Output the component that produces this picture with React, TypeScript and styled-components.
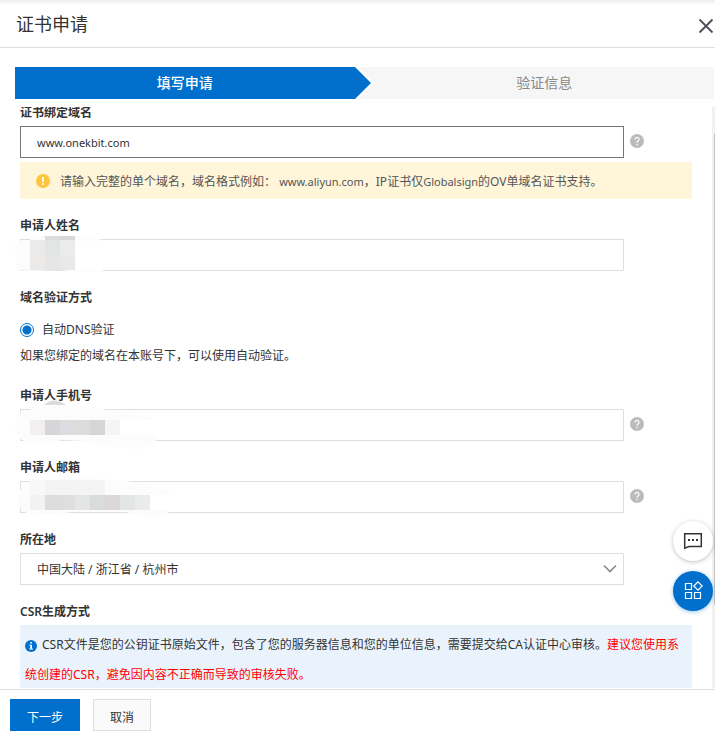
import React from "react";
import styled, { createGlobalStyle } from "styled-components";

const GlobalStyle = createGlobalStyle`
  * { box-sizing: border-box; }
  body { margin: 0; background: #fff; }
  body, button, input, select {
    font-family: "Noto Sans", "Noto Sans CJK SC", sans-serif;
    font-size: 12px;
    color: #333;
  }
`;

const Dialog = styled.main`
  display: flex;
  flex-direction: column;
  height: 100vh;
  background: #fff;
`;

const Header = styled.header`
  flex: none;
  display: flex;
  align-items: center;
  justify-content: space-between;
  height: 48px;
  padding: 0 1px 0 16px;
  border-bottom: 1px solid #dedede;
  background: linear-gradient(#ededed, #fff 5px);
`;

const Title = styled.h1`
  margin: 0;
  font-size: 18px;
  line-height: 24px;
  font-weight: 400;
`;

const CloseButton = styled.button`
  display: flex;
  margin-top: 4px;
  padding: 0;
  border: 0;
  background: none;
  cursor: pointer;
`;

const Steps = styled.ol`
  flex: none;
  display: flex;
  margin: 19px 1px 8px 15px;
  padding: 0;
  list-style: none;
`;

const Step = styled.li<{ $active?: boolean }>`
  flex: 1;
  height: 32px;
  line-height: 32px;
  text-align: center;
  font-size: 14px;
  font-weight: ${(p) => (p.$active ? 500 : 400)};
  color: ${(p) => (p.$active ? "#fff" : "#888")};
  background: ${(p) => (p.$active ? "#0070cc" : "#f6f6f6")};
`;

const StepArrow = styled.li`
  display: flex;
  width: 20px;
`;

const Body = styled.div`
  flex: 1;
  min-height: 0;
  display: flex;
  margin-bottom: 1px;
  overflow: hidden;
`;

const Form = styled.form`
  flex: 1;
  min-width: 0;
  margin-top: -5px;
  padding: 0 20px;
`;

const ScrollTrack = styled.div`
  flex: none;
  width: 3px;
  padding: 27px 0 83px 2px;
  background: #f1f1f1;
`;

const ScrollThumb = styled.div`
  height: 100%;
  background: #c1c1c1;
`;

const Field = styled.div`
  margin-bottom: 16px;
`;

const Label = styled.label`
  display: block;
  margin-bottom: 2px;
  line-height: 22px;
  font-weight: 600;
`;

const Control = styled.div`
  position: relative;
  display: grid;
  grid-template-columns: 1fr 62px;
  column-gap: 6px;
`;

const TextInput = styled.input<{ $focused?: boolean }>`
  width: 100%;
  height: 32px;
  padding: 0 16px;
  border: 1px solid ${(p) => (p.$focused ? "#777" : "#dedede")};
  border-radius: 0;
  background: #fff;
  font-size: 11px;
  outline: none;
`;

const Select = styled.select`
  grid-area: 1 / 1;
  width: 100%;
  height: 32px;
  padding: 0 16px;
  border: 1px solid #dedede;
  border-radius: 0;
  appearance: none;
  background: #fff;
  outline: none;
`;

const SelectArrow = styled.svg`
  grid-area: 1 / 1;
  align-self: center;
  justify-self: end;
  margin-right: 7px;
  pointer-events: none;
`;

const HelpButton = styled.button`
  align-self: start;
  justify-self: start;
  display: flex;
  margin-top: 8px;
  padding: 0;
  border: 0;
  background: none;
`;

const Mask = styled.svg`
  position: absolute;
  left: -10px;
  top: -12px;
  pointer-events: none;
`;

const Warning = styled.p`
  display: flex;
  align-items: center;
  gap: 10px;
  height: 37px;
  margin: 4px 0 16px;
  padding: 0 16px;
  background: #fff6da;
  color: #555;
`;

const Latin = styled.span`
  font-size: 11px;
`;

const Fieldset = styled.fieldset`
  margin: 0 0 18px;
  padding: 0;
  border: 0;
`;

const Legend = styled.legend`
  padding: 0;
  margin-bottom: 10px;
  line-height: 22px;
  font-weight: 600;
`;

const RadioLabel = styled.label`
  display: flex;
  align-items: center;
  gap: 8px;
  line-height: 22px;
`;

const Radio = styled.input`
  appearance: none;
  width: 14px;
  height: 14px;
  margin: 0;
  border: 1px solid #0070cc;
  border-radius: 50%;
  background: radial-gradient(circle, #0070cc 4px, #fff 5px);
`;

const Hint = styled.p`
  margin: 4px 0 0;
  line-height: 22px;
`;

const GroupTitle = styled.h2`
  margin: 0 0 2px;
  font-size: 12px;
  line-height: 22px;
  font-weight: 600;
`;

const Notice = styled.p`
  margin: 0;
  padding: 5px;
  line-height: 30px;
  background: #eaf3fb;
`;

const InfoIcon = styled.svg`
  margin-right: 5px;
  vertical-align: -3px;
`;

const Danger = styled.span`
  color: #f00;
`;

const Footer = styled.footer`
  flex: none;
  display: flex;
  gap: 13px;
  height: 48px;
  padding: 9px 10px;
  border-top: 1px solid #dedede;
`;

const Button = styled.button<{ $primary?: boolean }>`
  height: 32px;
  padding: 4px 16px 0;
  border: 1px solid ${(p) => (p.$primary ? "#0070cc" : "#dedede")};
  background: ${(p) => (p.$primary ? "#0070cc" : "#fafafa")};
  color: ${(p) => (p.$primary ? "#fff" : "#333")};
  cursor: pointer;
`;

const FloatingTools = styled.aside`
  position: fixed;
  right: 2px;
  bottom: 126px;
  display: grid;
  gap: 10px;
`;

const RoundButton = styled.button<{ $primary?: boolean }>`
  display: flex;
  align-items: center;
  justify-content: center;
  width: 40px;
  height: 40px;
  padding: 0;
  border: 0;
  border-radius: 50%;
  background: ${(p) => (p.$primary ? "#0070cc" : "#fff")};
  box-shadow: 0 1px 4px ${(p) => (p.$primary ? "rgba(0,112,204,.4)" : "rgba(0,0,0,.25)")};
`;

function Help() {
  return (
    <HelpButton type="button" aria-label="帮助">
      <svg width="14" height="14" viewBox="0 0 14 14">
        <circle cx="7" cy="7" r="7" fill="#bbb" />
        <path d="M5 5.4a2 2 0 1 1 3.1 1.6C7.3 7.5 7 7.8 7 8.7" fill="none" stroke="#fff" strokeWidth="1.2" />
        <circle cx="7" cy="10.5" r=".8" fill="#fff" />
      </svg>
    </HelpButton>
  );
}

type Cell = [number, number, number, number, string];

function Mosaic({ cells, smear, shade }: { cells: Cell[]; smear: string; shade?: string }) {
  return (
    <Mask width="180" height="56" viewBox="0 0 180 56" aria-hidden="true">
      {shade && <path d={shade} fill="#dadbdb" />}
      <path d={smear} fill="#fcfcfc" />
      {cells.map(([x, y, w, h, fill]) => (
        <rect key={`${x}-${y}`} x={x} y={y} width={w} height={h} fill={fill} />
      ))}
    </Mask>
  );
}

const nameCells: Cell[] = [
  [20, 13, 15, 30, "#ebeae9"],
  [35, 9, 15, 4, "#dcdddd"],
  [50, 9, 15, 4, "#d7d9d9"],
  [35, 13, 15, 15, "#e2e4e6"],
  [50, 13, 15, 15, "#ebedec"],
  [35, 28, 15, 15, "#e6e6e6"],
  [50, 28, 15, 15, "#e9e9e9"],
];

const phoneCells: Cell[] = [
  [20, 23, 15, 15, "#f1f0ee"],
  [35, 23, 15, 15, "#d6d6d8"],
  [50, 23, 15, 15, "#dcdde0"],
  [65, 23, 15, 15, "#dcdcda"],
  [80, 23, 15, 15, "#d8d5d6"],
  [95, 23, 15, 15, "#f4f5f7"],
];

const emailCells: Cell[] = [
  [20, 11, 15, 15, "#f8f8f8"],
  [35, 11, 60, 15, "#f4f4f4"],
  [20, 26, 15, 15, "#f3f1f2"],
  [35, 26, 15, 15, "#dcdedd"],
  [50, 26, 15, 15, "#dedede"],
  [65, 26, 15, 15, "#e4e5e5"],
  [80, 26, 15, 15, "#dadcdb"],
  [95, 26, 15, 15, "#dcd8da"],
  [110, 26, 15, 15, "#e4e6e6"],
  [125, 26, 15, 15, "#eaebed"],
];

export default function App() {
  return (
    <>
      <GlobalStyle />
      <Dialog>
        <Header>
          <Title>证书申请</Title>
          <CloseButton type="button" aria-label="关闭">
            <svg width="16" height="16" viewBox="0 0 16 16">
              <path d="M1.5 1.5l13 13M14.5 1.5l-13 13" stroke="#4a4f57" strokeWidth="1.8" />
            </svg>
          </CloseButton>
        </Header>

        <Steps>
          <Step $active aria-current="step">填写申请</Step>
          <StepArrow aria-hidden="true">
            <svg width="20" height="32" viewBox="0 0 20 32">
              <path d="M0 0h20v32H0z" fill="#f6f6f6" />
              <path d="M0 0h3l16 16L3 32H0z" fill="#fff" />
              <path d="M0 0l16 16L0 32z" fill="#0070cc" />
            </svg>
          </StepArrow>
          <Step>验证信息</Step>
        </Steps>

        <Body>
          <Form>
            <Label htmlFor="domain">证书绑定域名</Label>
            <Control>
              <TextInput id="domain" $focused defaultValue="www.onekbit.com" />
              <Help />
            </Control>
            <Warning>
              <svg width="14" height="14" viewBox="0 0 14 14" aria-hidden="true">
                <circle cx="7" cy="7" r="7" fill="#ffc440" />
                <path d="M7 3v5M7 9.3v1.6" stroke="#fff" strokeWidth="1.8" />
              </svg>
              <span>
                请输入完整的单个域名，域名格式例如： <Latin>www.aliyun.com</Latin>，IP证书仅<Latin>Globalsign</Latin>的OV单域名证书支持。
              </span>
            </Warning>

            <Field>
              <Label htmlFor="name">申请人姓名</Label>
              <Control>
                <TextInput id="name" />
                <Mosaic
                  cells={nameCells}
                  shade="M23 13L35 9H68V13z"
                  smear="M5 17L12 13H20V10L65 9L82 11L94 13V14H66V42L93 43V45H66L50 43L20 44L6 43z"
                />
              </Control>
            </Field>

            <Fieldset>
              <Legend>域名验证方式</Legend>
              <RadioLabel>
                <Radio type="radio" name="verify" defaultChecked />
                自动DNS验证
              </RadioLabel>
              <Hint>如果您绑定的域名在本账号下，可以使用自动验证。</Hint>
            </Fieldset>

            <Field>
              <Label htmlFor="phone">申请人手机号</Label>
              <Control>
                <TextInput id="phone" />
                <Help />
                <Mosaic
                  cells={phoneCells}
                  shade="M34 8Q44 -1 56 8z"
                  smear="M5 28C5 17 15 12 30 11Q60 5 91 12Q125 17 144 22V23H110V38H148Q145 52 126 52Q98 50 74 44L52 43Q40 46 14 44Q5 39 5 28z"
                />
              </Control>
            </Field>

            <Field>
              <Label htmlFor="email">申请人邮箱</Label>
              <Control>
                <TextInput id="email" />
                <Help />
                <Mosaic
                  cells={emailCells}
                  smear="M8 30C8 18 18 13 28 11Q80 7 125 13Q148 17 160 24V26H140V41H160Q157 49 145 49Q130 47 116 43L61 43Q40 47 17 44Q8 41 8 30z"
                />
              </Control>
            </Field>

            <Field>
              <Label htmlFor="location">所在地</Label>
              <Control>
                <Select id="location" defaultValue="hz">
                  <option value="hz">中国大陆 / 浙江省 / 杭州市</option>
                </Select>
                <SelectArrow width="14" height="10" viewBox="0 0 14 10" aria-hidden="true">
                  <path d="M1 1.5l6 6 6-6" fill="none" stroke="#888" strokeWidth="1.6" />
                </SelectArrow>
              </Control>
            </Field>

            <GroupTitle>CSR生成方式</GroupTitle>
            <Notice>
              <InfoIcon width="12" height="12" viewBox="0 0 12 12" aria-hidden="true">
                <circle cx="6" cy="6" r="6" fill="#0070cc" />
                <path d="M5.2 2h1.8v1.6H5.2zM4.4 4.8H7v3.8h.9v1H4.3v-1h1V5.8h-.9z" fill="#fff" />
              </InfoIcon>
              CSR文件是您的公钥证书原始文件，包含了您的服务器信息和您的单位信息，需要提交给CA认证中心审核。
              <Danger>建议您使用系统创建的CSR，避免因内容不正确而导致的审核失败。</Danger>
            </Notice>
          </Form>
          <ScrollTrack aria-hidden="true">
            <ScrollThumb />
          </ScrollTrack>
        </Body>

        <Footer>
          <Button type="button" $primary>下一步</Button>
          <Button type="button">取消</Button>
        </Footer>
      </Dialog>

      <FloatingTools>
        <RoundButton type="button" aria-label="在线咨询">
          <svg width="20" height="20" viewBox="0 0 20 20" fill="none">
            <path d="M1.7 17.2V2.7h16.6v12.8H6z" stroke="#333" strokeWidth="1.5" />
            <path d="M5 8h2v2H5zM9 8h2v2H9zM13 8h2v2h-2z" fill="#333" />
          </svg>
        </RoundButton>
        <RoundButton type="button" $primary aria-label="更多工具">
          <svg width="20" height="20" viewBox="0 0 20 20" fill="none" stroke="#fff" strokeWidth="1.2">
            <path d="M2.5 2.5h6v6h-6zM2.5 11.5h6v6h-6zM11.5 11.5h6v6h-6zM15 .8L19.2 5 15 9.2 10.8 5z" />
          </svg>
        </RoundButton>
      </FloatingTools>
    </>
  );
}
